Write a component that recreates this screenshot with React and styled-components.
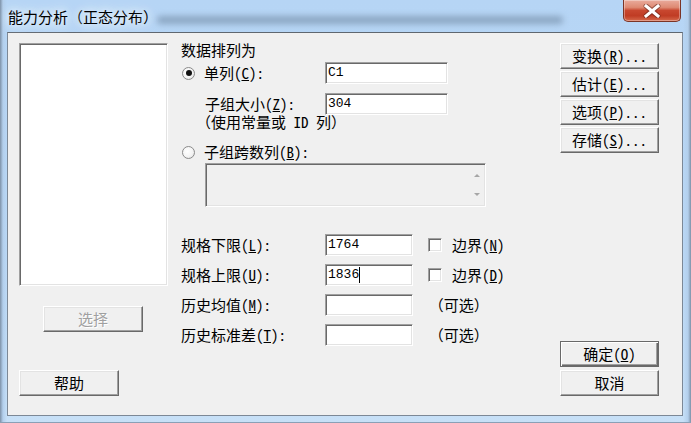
import React from 'react';
import styled, { createGlobalStyle, css } from 'styled-components';

const GlobalStyle = createGlobalStyle`
  html, body { margin: 0; padding: 0; background: #ffffff; }
  body {
    font-family: "Noto Sans CJK SC", "Noto Sans", sans-serif;
  }
`;

const sunken = css`
  box-sizing: border-box;
  border: 1px solid;
  border-color: #a0a0a0 #ffffff #ffffff #a0a0a0;
  box-shadow: inset 1px 1px 0 #696969, inset -1px -1px 0 #e3e3e3;
`;

const Window = styled.div`
  width: 691px;
  height: 423px;
  box-sizing: border-box;
  display: flex;
  flex-direction: column;
  padding: 0 8px 7px 7px;
  background:
    linear-gradient(90deg, #7d91a7 0, #b3cfec 3px, rgba(187, 216, 245, 0) 7px),
    linear-gradient(270deg, #7d91a7 0, #b3cfec 3px, rgba(187, 216, 245, 0) 8px),
    linear-gradient(180deg, #b6d5f5 0, #bad8f6 60%, #c7e0f7 100%);
  box-shadow: inset 0 -1px 0 #8aa0b6;
`;

const TitleBar = styled.div`
  height: 32px;
  display: flex;
  align-items: flex-start;
  position: relative;

  &::before {
    content: '';
    position: absolute;
    left: 150px;
    right: 120px;
    top: 16px;
    height: 8px;
    background: #8aa5c1;
    filter: blur(3px);
    border-radius: 4px;
  }
`;

const TitleText = styled.div`
  position: relative;
  margin: 8px 0 0 1px;
  font-size: 15px;
  line-height: 18px;
  color: #000;
  text-shadow: 0 0 6px #e8f3ff, 0 0 10px #e8f3ff, 0 0 14px #e8f3ff;
`;

const Paren = styled.span`
  display: inline-block;
  width: 1em;
  text-align: ${p => (p.$open ? 'right' : 'left')};
  padding: ${p => (p.$open ? '0 2px 0 0' : '0')};
  box-sizing: border-box;
`;

const CloseButton = styled.div`
  position: relative;
  margin-left: auto;
  margin-right: 2px;
  width: 58px;
  height: 22px;
  box-sizing: border-box;
  border: 1px solid #7b3426;
  border-top: none;
  border-radius: 0 0 5px 5px;
  background: linear-gradient(180deg, #e9ab9c 0, #de8a73 35%, #c8472f 50%, #c03c24 75%, #d5694b 100%);
  box-shadow: inset 0 0 0 1px rgba(255, 255, 255, 0.35);
  display: flex;
  align-items: center;
  justify-content: center;
`;

const Client = styled.div`
  flex: 1;
  box-sizing: border-box;
  border: 1px solid #7c8896;
  border-top-color: #5f6770;
  background: #f0f0f0;
  display: grid;
  grid-template-columns: 173px 379px 99px;
  padding-right: 23px;
  color: #000;
  font-family: "Noto Sans Mono CJK SC", "Noto Sans CJK SC", sans-serif;
  font-size: 15px;
  line-height: 16px;
`;

const LeftCol = styled.div`
  display: flex;
  flex-direction: column;
  align-items: flex-start;
  padding: 10px 0 19px 11px;
`;

const ListBox = styled.div`
  ${sunken}
  width: 149px;
  height: 243px;
  background: #ffffff;
`;

const Button = styled.div`
  box-sizing: border-box;
  width: ${p => p.$w || 99}px;
  height: 26px;
  display: flex;
  align-items: center;
  justify-content: center;
  background: #f0f0f0;
  border: 1px solid;
  border-color: #ffffff #696969 #696969 #ffffff;
  box-shadow: inset -1px -1px 0 #a0a0a0, inset 1px 1px 0 #e3e3e3;
  font-size: 15px;
  color: ${p => (p.$disabled ? '#a0a0a0' : '#000')};
  text-shadow: ${p => (p.$disabled ? '1px 1px 0 #ffffff' : 'none')};
  ${p => p.$default && css`
    border-color: #696969;
    box-shadow: inset 1px 1px 0 #ffffff, inset -1px -1px 0 #696969, inset -2px -2px 0 #a0a0a0;
  `}
  u { text-underline-offset: 1px; }
`;

const SelectButton = styled(Button)`
  margin: 20px 0 0 24px;
`;

const HelpButton = styled(Button)`
  margin-top: auto;
`;

const MidCol = styled.div`
  display: flex;
  flex-direction: column;
  align-items: flex-start;
  padding-top: 9px;
`;

const Heading = styled.div`
  height: 16px;
`;

const FieldRow = styled.div`
  display: grid;
  grid-template-columns: 144px auto auto auto;
  align-items: center;
  height: 22px;
  margin-top: ${p => p.$mt || 0}px;
`;

const RowLabel = styled.div`
  display: flex;
  align-items: center;
  padding-left: ${p => p.$indent || 0}px;
  u { text-underline-offset: 1px; }
`;

const Radio = styled.span`
  box-sizing: border-box;
  width: 13px;
  height: 13px;
  margin: 0 9px 0 1px;
  border-radius: 50%;
  border: 1px solid #8b8b8b;
  background: radial-gradient(circle at 40% 40%, #ffffff 0, #f4f4f4 55%, #d9d9d9 100%);
  display: inline-flex;
  align-items: center;
  justify-content: center;
  flex-shrink: 0;

  &::after {
    content: '';
    width: 6px;
    height: 6px;
    border-radius: 50%;
    background: ${p => (p.$checked ? '#111' : 'transparent')};
  }
`;

const Field = styled.div`
  ${sunken}
  width: ${p => p.$w}px;
  height: 22px;
  background: #ffffff;
  display: flex;
  align-items: center;
  padding-left: 2px;
  font-family: "Liberation Mono", "DejaVu Sans Mono", monospace;
  font-size: 13px;
`;

const Caret = styled.span`
  width: 1px;
  height: 16px;
  background: #000;
`;

const Hint = styled.div`
  height: 14px;
  line-height: 14px;
  padding-left: 15px;
`;

const RadioLine = styled.div`
  display: flex;
  align-items: center;
  height: 16px;
  margin-top: 15px;
  u { text-underline-offset: 1px; }
`;

const MultiList = styled.div`
  ${sunken}
  width: 281px;
  height: 44px;
  margin: 3px 0 0 24px;
  background: #f0f0f0;
  display: flex;
  justify-content: flex-end;
`;

const ScrollTrack = styled.div`
  width: 17px;
  display: flex;
  flex-direction: column;
  align-items: center;
  justify-content: space-between;
  padding: 10px 0 10px;
`;

const Arrow = styled.span`
  width: 0;
  height: 0;
  border-left: 3px solid transparent;
  border-right: 3px solid transparent;
  ${p => (p.$down
    ? css`border-top: 3px solid #a6a6a6;`
    : css`border-bottom: 3px solid #a6a6a6;`)}
`;

const SpecGrid = styled.div`
  display: flex;
  flex-direction: column;
  gap: 8px;
  margin-top: 27px;
`;

const Check = styled.span`
  ${sunken}
  width: 14px;
  height: 14px;
  margin: 0 10px 0 15px;
  background: #ffffff;
`;

const Side = styled.div`
  display: flex;
  align-items: center;
  u { text-underline-offset: 1px; }
`;

const Optional = styled.div`
  padding-left: 8px;
`;

const RightCol = styled.div`
  display: flex;
  flex-direction: column;
  justify-content: space-between;
  padding: 10px 0 19px;
`;

const ButtonStack = styled.div`
  display: flex;
  flex-direction: column;
  gap: ${p => p.$gap}px;
`;

function CloseGlyph() {
  return (
    <svg width="18" height="14" viewBox="0 0 18 14">
      <path d="M3 2 L15 12 M15 2 L3 12" stroke="#5a2219" strokeWidth="5" strokeLinecap="round" opacity="0.55" />
      <path d="M3 2 L15 12 M15 2 L3 12" stroke="#ffffff" strokeWidth="3" strokeLinecap="square" />
    </svg>
  );
}

const specs = [
  { label: '规格下限', key: 'L', value: '1764', side: 'N' },
  { label: '规格上限', key: 'U', value: '1836', side: 'D', caret: true },
  { label: '历史均值', key: 'M', value: '', optional: true },
  { label: '历史标准差', key: 'T', value: '', optional: true },
];

export default function App() {
  return (
    <>
      <GlobalStyle />
      <Window>
        <TitleBar>
          <TitleText>
            能力分析<Paren $open>（</Paren>正态分布<Paren>）</Paren>
          </TitleText>
          <CloseButton><CloseGlyph /></CloseButton>
        </TitleBar>
        <Client>
          <LeftCol>
            <ListBox />
            <SelectButton $w={100} $disabled>选择</SelectButton>
            <HelpButton $w={100}>帮助</HelpButton>
          </LeftCol>

          <MidCol>
            <Heading>数据排列为</Heading>
            <FieldRow $mt={4}>
              <RowLabel>
                <Radio $checked />
                单列(<u>C</u>):
              </RowLabel>
              <Field $w={123}>C1</Field>
            </FieldRow>
            <FieldRow $mt={9}>
              <RowLabel $indent={24}>子组大小(<u>Z</u>):</RowLabel>
              <Field $w={123}>304</Field>
            </FieldRow>
            <Hint>
              <Paren $open>（</Paren>使用常量或 ID 列<Paren>）</Paren>
            </Hint>
            <RadioLine>
              <Radio />
              子组跨数列(<u>B</u>):
            </RadioLine>
            <MultiList>
              <ScrollTrack>
                <Arrow />
                <Arrow $down />
              </ScrollTrack>
            </MultiList>

            <SpecGrid>
              {specs.map(s => (
                <FieldRow key={s.key}>
                  <RowLabel>{s.label}(<u>{s.key}</u>):</RowLabel>
                  <Field $w={88}>
                    {s.value}
                    {s.caret && <Caret />}
                  </Field>
                  {s.side && (
                    <Side>
                      <Check />
                      边界(<u>{s.side}</u>)
                    </Side>
                  )}
                  {s.optional && (
                    <Optional>
                      <Paren $open>（</Paren>可选<Paren>）</Paren>
                    </Optional>
                  )}
                </FieldRow>
              ))}
            </SpecGrid>
          </MidCol>

          <RightCol>
            <ButtonStack $gap={2}>
              <Button>变换(<u>R</u>)...</Button>
              <Button>估计(<u>E</u>)...</Button>
              <Button>选项(<u>P</u>)...</Button>
              <Button>存储(<u>S</u>)...</Button>
            </ButtonStack>
            <ButtonStack $gap={3}>
              <Button $default>确定(<u>O</u>)</Button>
              <Button>取消</Button>
            </ButtonStack>
          </RightCol>
        </Client>
      </Window>
    </>
  );
}
